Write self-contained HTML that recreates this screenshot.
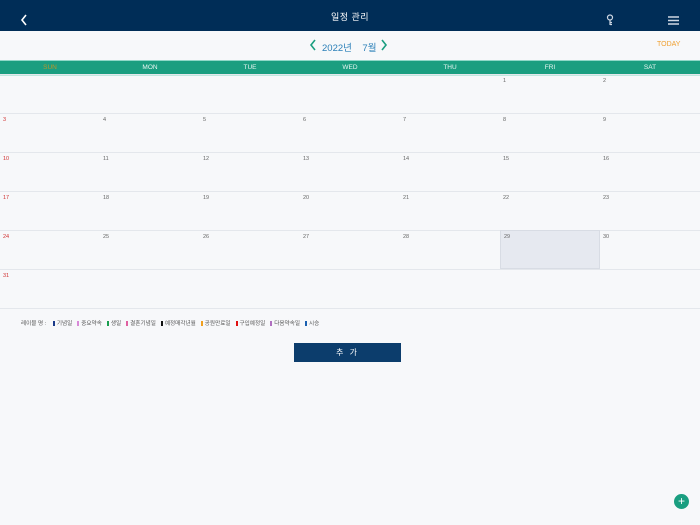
<!DOCTYPE html>
<html><head><meta charset="utf-8"><style>
*{margin:0;padding:0;box-sizing:border-box}
body{width:700px;height:525px;background:#f7f8fa;font-family:"Liberation Sans","Noto Sans CJK KR",sans-serif;position:relative;overflow:hidden}
.hdr{position:absolute;left:0;top:0;width:700px;height:31px;background:#002d57;color:#fff}
.hdr .t{position:absolute;left:0;right:0;top:10px;text-align:center;font-size:9px;letter-spacing:.5px}
.sub{position:absolute;top:31px;left:0;width:700px;height:30px;background:#f7f8fa}
.ym{position:absolute;left:322px;top:9px;font-size:9.5px;color:#2a7fb8}
.today{position:absolute;left:657px;top:10px;font-size:7px;color:#f0a030}
.wk{position:absolute;top:60px;left:0;width:700px;height:16px;background:#1a9e80;border-top:1px solid #8fd8c8;border-bottom:2px solid #bfe8de}
.wk span{position:absolute;top:3px;width:100px;text-align:center;font-size:6.5px;color:#e8f4f0}
.cell{position:absolute;width:100px;height:39px;border-top:1px solid #e4e7ec;font-size:5.5px;color:#666;padding:3px 0 0 3px}
.sun{color:#d03030}
.hl{background:#e6e9f0;border:1px solid #d8dce4}
.leg{position:absolute;top:319px;left:21px;font-size:5.6px;color:#555;white-space:nowrap}
.leg i{display:inline-block;width:2px;height:5px;margin:0 2px 0 5px;vertical-align:-1px}
.btn{position:absolute;left:294px;top:343px;width:107px;height:19px;background:#0c3d6c;color:#fff;font-size:8px;text-align:center;line-height:19px;letter-spacing:2px}
.fab{position:absolute;left:674px;top:494px;width:15px;height:15px;border-radius:50%;background:#1a9e80;color:#fff;text-align:center;font-size:12px;line-height:14px}
</style></head><body>
<div class="hdr">
<svg style="position:absolute;left:20px;top:14px" width="8" height="12"><path d="M6 1 L2 6 L6 11" stroke="#fff" stroke-width="1.6" fill="none"/></svg>
<div class="t">일정 관리</div>
<svg style="position:absolute;left:606px;top:14px" width="8" height="12"><circle cx="4" cy="3.5" r="2.5" stroke="#cfd8e4" stroke-width="1.2" fill="none"/><path d="M4 6 V11 M4 8.5 H6 M4 10.5 H6" stroke="#cfd8e4" stroke-width="1.2"/></svg>
<svg style="position:absolute;left:668px;top:16px" width="11" height="9"><path d="M0 1H11M0 4.5H11M0 8H11" stroke="#cfd8e4" stroke-width="1.4"/></svg>
</div>
<div class="sub">
<svg style="position:absolute;left:309px;top:8px" width="8" height="12"><path d="M6 1 L2 6 L6 11" stroke="#1a9e80" stroke-width="1.6" fill="none"/></svg>
<div class="ym">2022년 &nbsp;&nbsp;&nbsp;7월</div>
<svg style="position:absolute;left:380px;top:8px" width="8" height="12"><path d="M2 1 L6 6 L2 11" stroke="#1a9e80" stroke-width="1.6" fill="none"/></svg>
<div class="today">TODAY</div>
</div>
<div class="wk">
<span style="left:0;color:#b8962a">SUN</span><span style="left:100px">MON</span><span style="left:200px">TUE</span><span style="left:300px">WED</span><span style="left:400px">THU</span><span style="left:500px">FRI</span><span style="left:600px">SAT</span>
</div>
<div id="cal"></div>
<script>
var h='';
for(var r=0;r<6;r++)for(var c=0;c<7;c++){
 var n=r*7+c-4;
 var show=n>=1&&n<=31;
 var cls='cell'+(c==0?' sun':'')+(n==29?' hl':'');
 h+='<div class="'+cls+'" style="left:'+(c*100)+'px;top:'+(74+r*39)+'px">'+(show?n:'')+'</div>';
}
h+='<div class="cell" style="left:0;top:308px;width:700px;height:1px"></div>';
document.getElementById('cal').innerHTML=h;
</script>
<div class="leg">레이블 명 : <i style="background:#1a3a8a"></i>기념일<i style="background:#d88ad8"></i>중요약속<i style="background:#1a9e50"></i>생일<i style="background:#e060a0"></i>결혼기념일<i style="background:#111"></i>예정매각년월<i style="background:#f0a020"></i>공원만료일<i style="background:#e01010"></i>구입예정일<i style="background:#b070c0"></i>다음약속일<i style="background:#1a60b0"></i>시승</div>
<div class="btn">추 가</div>
<div class="fab">+</div>
</body></html>
